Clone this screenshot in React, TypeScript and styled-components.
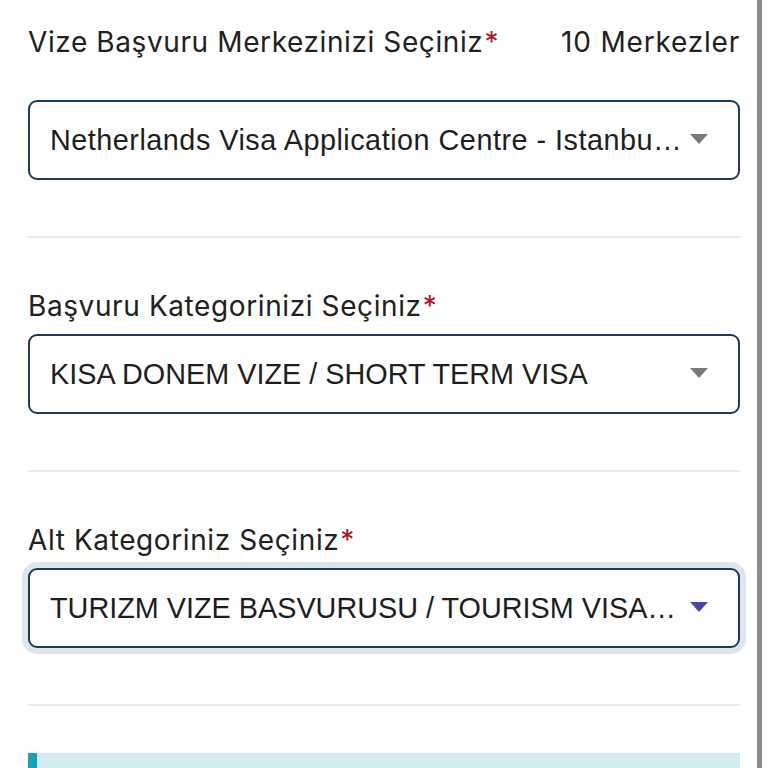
import styled, { createGlobalStyle } from 'styled-components';

const GlobalStyle = createGlobalStyle`
  html, body {
    margin: 0;
    padding: 0;
    background: #fff;
    height: 768px;
    overflow: hidden;
  }
  * {
    box-sizing: border-box;
  }
`;

const StyledPage = styled.div`
  display: flex;
  height: 768px;
  width: 768px;
`;

const StyledContent = styled.main`
  flex: 1;
  min-width: 0;
  padding: 26px 17px 0 28px;
`;

const StyledScrollbar = styled.div`
  background-color: #8b8b8b;
  flex: 0 0 5px;
  height: 100%;
  margin-right: 6px;
`;

const StyledHeaderRow = styled.div`
  align-items: baseline;
  display: flex;
  justify-content: space-between;
  margin-bottom: 42px;
`;

const StyledLabel = styled.label<{ $gap?: number }>`
  color: #212121;
  display: block;
  font-family: Inter, 'Noto Sans', sans-serif;
  font-size: 28px;
  letter-spacing: 0.6px;
  line-height: 32px;
  margin-bottom: ${({ $gap }) => $gap ?? 12}px;
  white-space: nowrap;
  span {
    color: #b0132b;
    margin-left: 1px;
  }
`;

const StyledCount = styled.span`
  color: #212121;
  font-family: Inter, 'Noto Sans', sans-serif;
  font-size: 28px;
  letter-spacing: 0.8px;
  line-height: 32px;
`;

const StyledSelect = styled.div<{ $focused?: boolean }>`
  align-items: center;
  background-color: #fff;
  border: 2px solid #1c3a5b;
  border-radius: 9px;
  box-shadow: ${({ $focused }) => ($focused ? '0 0 0 6px #dfe5ec' : 'none')};
  display: flex;
  height: 80px;
  padding: 0 30px 0 20px;
`;

const StyledValue = styled.span<{ $tracking?: number }>`
  color: #1e1e1e;
  flex: 1;
  font-family: 'Liberation Sans', Arial, sans-serif;
  font-size: 28.8px;
  letter-spacing: ${({ $tracking }) => $tracking ?? 0}px;
  min-width: 0;
  overflow: hidden;
  padding-right: 6px;
  white-space: nowrap;
`;

const StyledCaret = styled.svg`
  flex: 0 0 auto;
  margin-top: -3px;
`;

const StyledDivider = styled.hr`
  border: 0;
  border-top: 2px solid #e9e9e9;
  margin: 56px 0 52px;
`;

const StyledInfo = styled.div`
  background-color: #d1ecf1;
  border-left: 9px solid #18a2b4;
  height: 90px;
  margin-top: -5px;
`;

type CaretProps = { color: string };

const Caret = ({ color }: CaretProps) => (
  <StyledCaret width="18" height="10" viewBox="0 0 18 10">
    <path d="M0 0h18L9 10z" fill={color} />
  </StyledCaret>
);

type SelectProps = {
  value: string;
  caretColor?: string;
  focused?: boolean;
  tracking?: number;
};

const Select = ({
  value,
  caretColor = '#7a7a7a',
  focused,
  tracking
}: SelectProps) => (
  <StyledSelect $focused={focused}>
    <StyledValue $tracking={tracking}>{value}</StyledValue>
    <Caret color={caretColor} />
  </StyledSelect>
);

const App = () => (
  <StyledPage>
    <GlobalStyle />
    <StyledContent>
      <StyledHeaderRow>
        <StyledLabel $gap={0}>
          Vize Başvuru Merkezinizi Seçiniz<span>*</span>
        </StyledLabel>
        <StyledCount>10 Merkezler</StyledCount>
      </StyledHeaderRow>
      <Select
        value="Netherlands Visa Application Centre - Istanbu…"
        tracking={0.5}
      />
      <StyledDivider />

      <StyledLabel>
        Başvuru Kategorinizi Seçiniz<span>*</span>
      </StyledLabel>
      <Select value="KISA DONEM VIZE / SHORT TERM VISA" />
      <StyledDivider />

      <StyledLabel>
        Alt Kategoriniz Seçiniz<span>*</span>
      </StyledLabel>
      <Select
        value="TURIZM VIZE BASVURUSU / TOURISM VISA…"
        caretColor="#4848a8"
        focused
      />
      <StyledDivider />

      <StyledInfo />
    </StyledContent>
    <StyledScrollbar />
  </StyledPage>
);

export default App;
